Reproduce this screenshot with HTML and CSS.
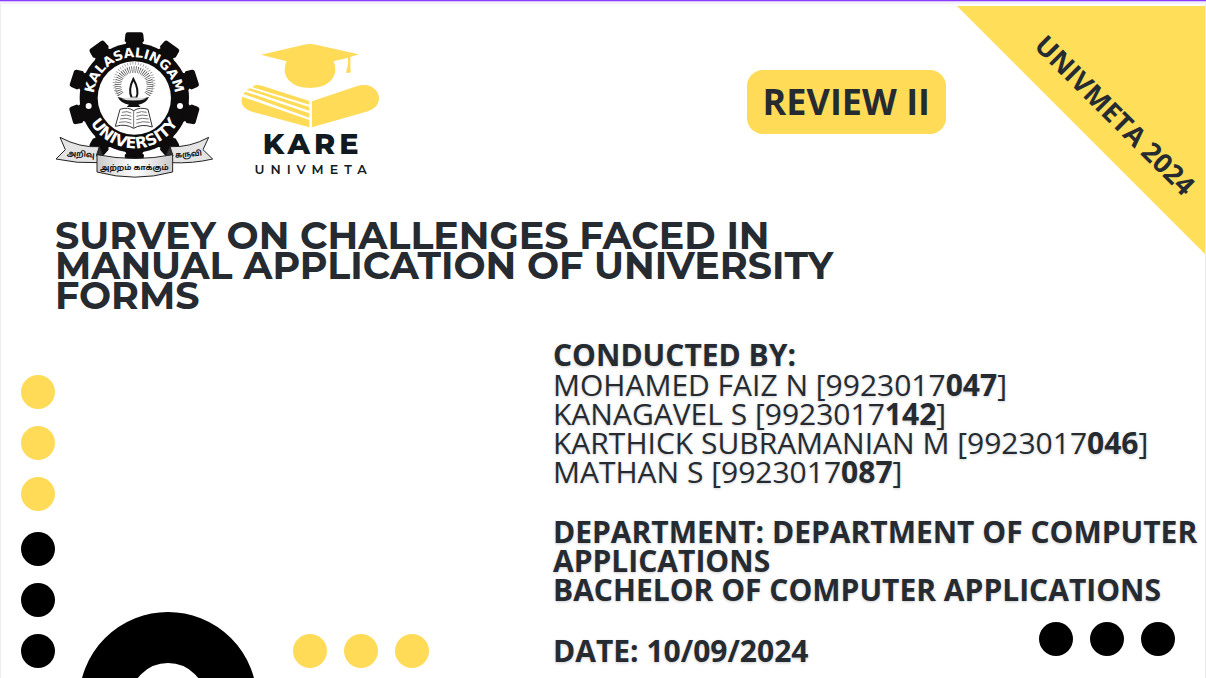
FILE: index.html
```html
<!DOCTYPE html>
<html lang="en">
<head>
<meta charset="utf-8">
<title>Survey on challenges faced in manual application of university forms</title>
<link rel="stylesheet" href="styles.css">
</head>
<body>
<main class="slide">
  <aside class="corner"><span class="corner-text">UNIVMETA 2024</span></aside>

  <header class="header">
    <div class="logos">
      <svg class="logo-university" viewBox="0 0 510 480" role="img" aria-label="Kalasalingam University">
        <defs>
          <path id="tooth" d="M-32 -155 L-24 -166 L-29 -171 L-27 -190 Q-26 -197 -20 -197 L20 -197 Q26 -197 27 -190 L29 -171 L24 -166 L32 -155Z"/>
          <path id="arc-top" d="M131 219 A122 122 0 0 1 375 219"/>
          <path id="arc-bottom" d="M102 219 A151 151 0 0 0 404 219"/>
          <linearGradient id="ribbon" x1="0" x2="1" y1="0" y2="0">
            <stop offset="0" stop-color="#c9c9c9"/><stop offset=".5" stop-color="#fff"/><stop offset="1" stop-color="#c9c9c9"/>
          </linearGradient>
        </defs>
        <g fill="#0d0b0c" transform="translate(253 219)">
          <circle r="164"/>
          <use href="#tooth"/>
          <use href="#tooth" transform="rotate(36)"/><use href="#tooth" transform="rotate(-36)"/>
          <use href="#tooth" transform="rotate(72)"/><use href="#tooth" transform="rotate(-72)"/>
          <use href="#tooth" transform="rotate(106)"/><use href="#tooth" transform="rotate(-106)"/>
          <use href="#tooth" transform="rotate(144)"/><use href="#tooth" transform="rotate(-144)"/>
          <use href="#tooth" transform="rotate(180)"/>
        </g>
        <circle cx="253" cy="219" r="110" fill="#fff"/>
        <circle cx="116" cy="243" r="9" fill="#fff"/><circle cx="390" cy="243" r="9" fill="#fff"/>
        <text class="seal-top"><textPath href="#arc-top" startOffset="50%">KALASALINGAM</textPath></text>
        <text class="seal-bottom"><textPath href="#arc-bottom" startOffset="50%">UNIVERSITY</textPath></text>
        <path d="M212 208A48 48 0 1 1 292 208" fill="none" stroke="#444" stroke-width="20" stroke-dasharray="2 4"/>
        <path d="M204 211A60 60 0 1 1 300 211" fill="none" stroke="#888" stroke-width="8" stroke-dasharray="2 6"/>
        <path d="M250 162C239 184 238 204 245 218H259C266 203 263 185 250 162Z" fill="#fff" stroke="#111" stroke-width="6"/>
        <path d="M203 216Q252 230 297 216Q288 236 265 239L272 246H230L237 239Q213 236 203 216Z" fill="#111"/>
        <path d="M213 221Q250 212 290 221Q250 232 213 221Z" fill="#ddd"/>
        <path d="M210 253Q235 245 251 257Q270 245 294 253L307 306Q274 295 251 310Q227 295 196 304Z" fill="#fff" stroke="#333" stroke-width="3"/>
        <path d="M251 257V310M216 262Q232 257 244 264M213 272Q230 267 244 274M210 282Q229 277 244 284M207 292Q228 287 244 295M259 264Q274 257 290 262M259 274Q276 267 293 272M259 284Q277 277 296 282M259 295Q278 287 299 292" fill="none" stroke="#777" stroke-width="3"/>
        <g stroke="#222" stroke-width="3" stroke-linejoin="round">
          <path d="M30 337Q90 369 148 365V413Q80 416 18 402L46 374Z" fill="#e4e4e4"/>
          <path d="M476 337Q420 368 360 365V413Q430 416 488 402L459 374Z" fill="#e4e4e4"/>
          <path d="M148 365L139 392L160 395Z" fill="#333"/><path d="M360 365L369 392L346 395Z" fill="#333"/>
          <path d="M141 389Q255 412 368 389V441Q255 472 141 441Z" fill="url(#ribbon)"/>
        </g>
        <g class="motto">
          <text x="92" y="395" transform="rotate(4 92 395)">அறிவு</text>
          <text x="253" y="435">அற்றம் காக்கும்</text>
          <text x="416" y="395" transform="rotate(-5 416 395)">கருவி</text>
        </g>
      </svg>
      <svg class="logo-kare" viewBox="0 0 480 450" role="img" aria-label="KARE Univmeta">
        <g fill="#ffdb57">
          <path d="M93 71L222 41Q240 37 258 41L386 70L361 78V99L362 125H348L354 99V80L311 91Q316 101 316 118C314 150 284 171 240 171C196 171 166 150 164 118Q164 101 170 91Z"/>
          <path d="M246 211L382 165C420 153 447 176 447 203Q446 229 414 241L246 289Z"/>
          <path d="M70 164Q83 160 98 165L238 210V221L70 170Z"/>
          <path d="M60 172L50 176L238 239V228Z"/>
          <path d="M46 182L40 189L238 260V247Z"/>
          <path d="M37 197C29 218 41 235 68 243L238 289V267Z"/>
        </g>
        <text class="kare-name" x="248" y="370">KARE</text>
        <text class="kare-sub" x="251" y="428">UNIVMETA</text>
      </svg>
    </div>
    <p class="badge">REVIEW II</p>
  </header>

  <h1 class="title">SURVEY ON CHALLENGES FACED IN<br>MANUAL APPLICATION OF UNIVERSITY<br>FORMS</h1>

  <div class="body">
    <div class="decor">
      <div class="dots-column">
        <div class="dots vertical yellow"><i></i><i></i><i></i></div>
        <div class="dots vertical"><i></i><i></i><i></i></div>
      </div>
      <div class="ring-box"><div class="ring"></div></div>
      <div class="dots yellow"><i></i><i></i><i></i></div>
    </div>
    <section class="details">
      <h2 class="strong">CONDUCTED BY:</h2>
      <ul class="people">
        <li>MOHAMED FAIZ N [9923017<b>047</b>]</li>
        <li>KANAGAVEL S [9923017<b>142</b>]</li>
        <li>KARTHICK SUBRAMANIAN M [9923017<b>046</b>]</li>
        <li>MATHAN S [9923017<b>087</b>]</li>
      </ul>
      <p class="strong department">DEPARTMENT: DEPARTMENT OF COMPUTER APPLICATIONS<br>BACHELOR OF COMPUTER APPLICATIONS</p>
      <div class="date-row">
        <p class="strong">DATE: 10/09/2024</p>
        <div class="dots"><i></i><i></i><i></i></div>
      </div>
    </section>
  </div>
</main>
</body>
</html>
```

FILE: styles.css
```css
* { box-sizing: border-box; }
body, h1, h2, p, ul { margin: 0; padding: 0; }
body { background: #fff; color: #252b31; font-family: "Open Sans", sans-serif; }

.slide {
  position: relative;
  min-height: 100vh;
  overflow: hidden;
  border-top: 1px solid #8b3dff;
  box-shadow: inset 0 1px 0 #d9c4ff, inset 0 3px 0 #f3f1f7, inset 1px 0 0 #ebecf0, inset -1px 0 0 #ebecf0;
  display: flex;
  flex-direction: column;
}

.header { display: flex; justify-content: space-between; align-items: flex-start; padding: 24px 260px 0 50px; }
.logos { display: flex; gap: 10px; align-items: flex-end; }
.logo-university { width: 170px; height: 160px; }
.logo-kare { width: 160px; height: 150px; margin-bottom: 4px; }
.seal-top, .seal-bottom { fill: #fff; font-family: "DejaVu Sans", sans-serif; font-weight: 700; text-anchor: middle; }
.seal-top { font-size: 40px; }
.seal-bottom { font-size: 47px; }
.motto { font-family: "Noto Sans", "Noto Sans Tamil", sans-serif; font-size: 23px; font-weight: 700; text-anchor: middle; fill: #111; }
.kare-name { font-family: Montserrat, "DejaVu Sans", sans-serif; font-size: 86px; font-weight: 800; letter-spacing: 12px; text-anchor: middle; fill: #101a20; }
.kare-sub { font-family: Montserrat, Lato, sans-serif; font-size: 38px; font-weight: 600; letter-spacing: 18px; text-anchor: middle; fill: #101a20; }

.badge {
  margin-top: 45px;
  padding: 0 16px;
  border-radius: 16px;
  background: #ffdb57;
  font-size: 36px;
  line-height: 64px;
  font-weight: 700;
}

.corner {
  position: absolute;
  top: 5px;
  right: 1px;
  width: 248px;
  height: 248px;
  background: #ffde59;
  clip-path: polygon(0 0, 100% 0, 100% 100%);
  display: grid;
  place-items: center;
}
.corner-text { font-size: 27px; line-height: 36px; font-weight: 700; white-space: nowrap; transform: translate(34px, -15px) rotate(45deg); }

.title { margin: 36px 55px 0; font-family: Montserrat, Inter, sans-serif; font-size: 38px; line-height: 30px; font-weight: 700; }

.body { flex: 1; display: grid; grid-template-columns: 553px 1fr; margin-top: 29px; }
.decor { display: flex; align-items: flex-end; padding: 0 0 10px 21px; }
.dots-column { display: flex; flex-direction: column; gap: 21px; }
.dots { display: flex; gap: 17px; color: #000; }
.dots.vertical { flex-direction: column; }
.dots.yellow { color: #ffdb57; }
.dots i { width: 34px; height: 34px; border-radius: 50%; background: currentColor; }
.ring-box { height: 56px; margin: 0 36px 0 24px; }
.ring { width: 178px; height: 178px; border: 51px solid #000; border-radius: 50%; }

.details { font-size: 30px; line-height: 29px; text-shadow: 0 1px 3px #0003; }
.strong { font-size: 30px; font-weight: 700; }
.people { list-style: none; margin-top: 1px; font-weight: 400; }
.people b { font-weight: 700; }
.department { margin-top: 31px; }
.date-row { display: flex; justify-content: space-between; align-items: flex-end; margin: 18px 31px 0 0; }
.date-row .dots { margin-bottom: 9px; }
```
